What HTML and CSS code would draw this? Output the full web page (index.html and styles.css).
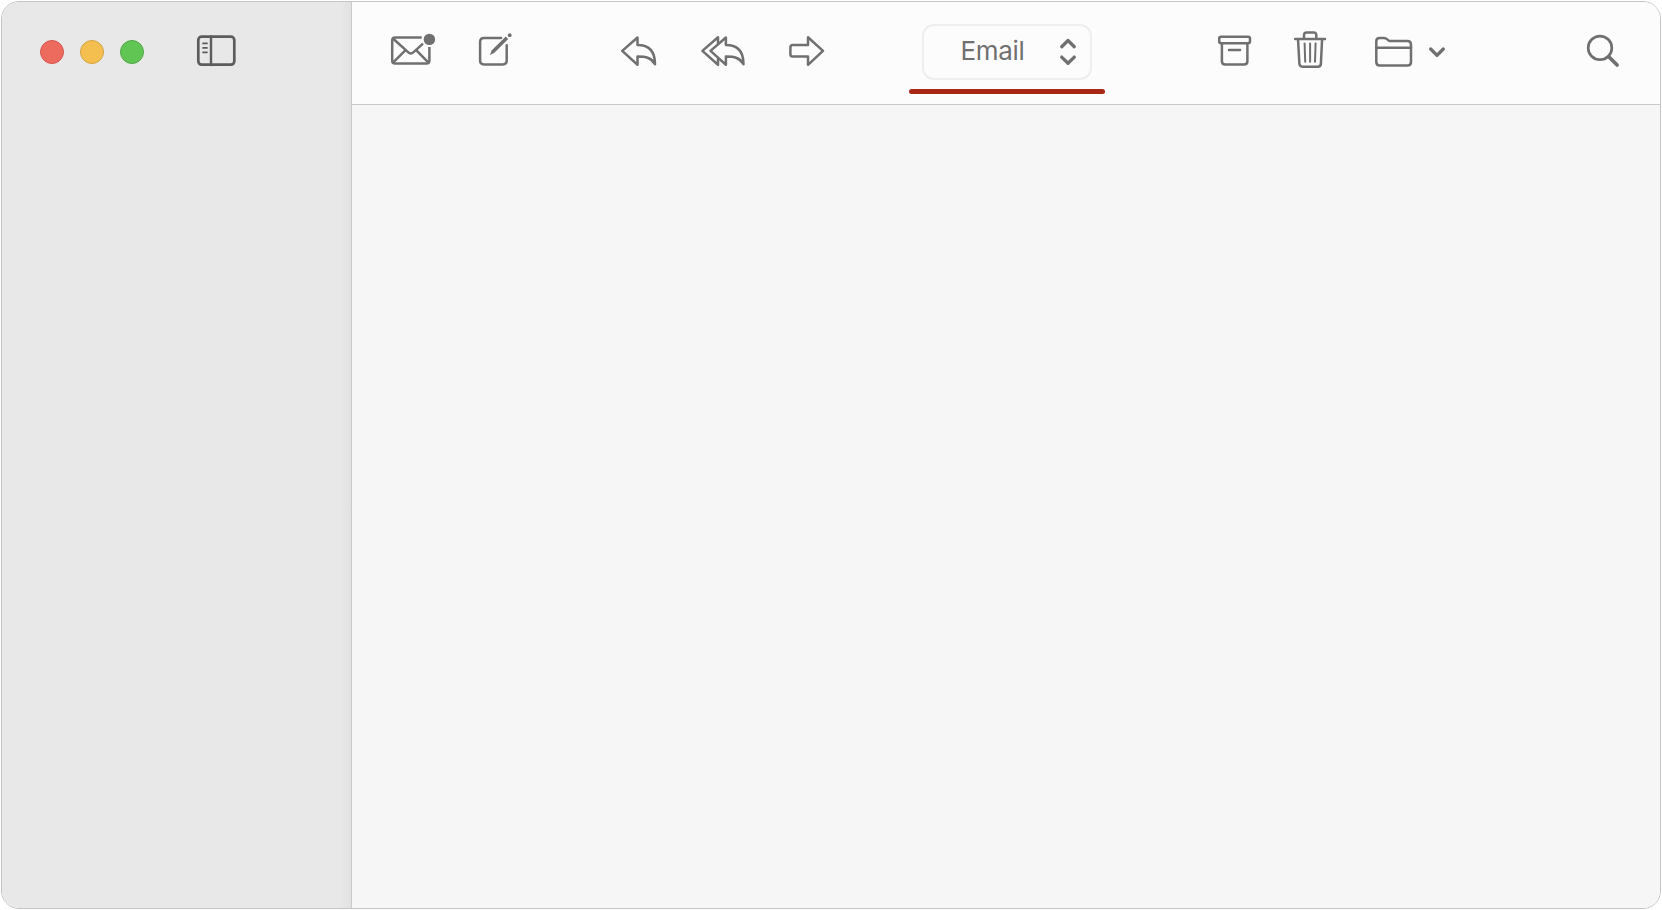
FILE: index.html
```html
<!DOCTYPE html>
<html lang="en">
<head>
<meta charset="utf-8">
<title>Mail</title>
<link rel="stylesheet" href="styles.css">
</head>
<body>
<div class="window">
  <aside class="sidebar">
    <div class="lights"><span class="light red"></span><span class="light yellow"></span><span class="light green"></span></div>
    <svg class="icon dark sidebar-toggle" width="44" height="40" viewBox="195 31 44 40">
      <rect x="198.3" y="36.7" width="36" height="28" rx="3.4" stroke-width="2.7"/>
      <path d="M211 36.5V65" stroke-width="2.4"/>
      <path d="M203 43.4h4M203 47.9h4M203 52.3h4" stroke-width="1.7"/>
    </svg>
  </aside>
  <main class="main">
    <header class="toolbar">
      <svg class="icon mail" width="48" height="40" viewBox="390 31 48 40">
        <path stroke-linecap="butt" d="M421.7 37.5H395.2Q392.2 37.5 392.2 40.5V60.4Q392.2 63.5 395.2 63.5H426.3Q429.4 63.5 429.4 60.4V47"/>
        <path stroke-linecap="butt" d="M393 38.5L408.3 52.4Q410.8 54.6 413.3 52.4L423 43.6M393 62.7L405.3 50.3M428.5 62.7L416.4 50.3"/>
        <circle class="solid" cx="429.4" cy="39.4" r="5.7"/>
      </svg>
      <svg class="icon compose" width="36" height="40" viewBox="477 31 36 40">
        <path d="M501 38.1H484Q480.1 38.1 480.1 42V60.6Q480.1 64.5 484 64.5H502.8Q506.7 64.5 506.7 60.6V45.2"/>
        <path class="solid" d="M490 54.9L491.8 50.3L505.8 36.5L508.2 38.9L494.4 52.8Z"/>
        <circle class="solid" cx="509.7" cy="35.2" r="1.9"/>
      </svg>
      <svg class="icon reply" width="40" height="40" viewBox="619 31 40 40">
        <path d="M637.5 37.5V45.1C648 45.1 655 50.5 655 64.2C651.5 57.8 646 56.6 637.5 56.6V64.7L622.2 50.9Z"/>
      </svg>
      <svg class="icon reply-all" width="48" height="40" viewBox="700 31 48 40">
        <path d="M725.9 37.5V45.1C736.4 45.1 743.5 50.5 743.5 64.2C740 57.8 734.4 56.6 725.9 56.6V64.7L710.5 50.9Z"/>
        <path d="M718 43.2V37.3L702.4 50.9L718 64.8V58.8"/>
      </svg>
      <svg class="icon forward" width="40" height="40" viewBox="787 31 40 40">
        <path d="M808 37.3V45.1H792.7Q790.4 45.1 790.4 47.5V54.3Q790.4 56.6 792.7 56.6H808V64.8L823 50.9Z"/>
      </svg>
      <div class="picker-wrap">
        <button class="picker"><span class="label">Email</span>
          <svg class="icon thick" width="18" height="30" viewBox="1059 37 18 30"><path d="M1061.7 46.7L1068 40.5L1074.3 46.7M1061.7 57.1L1068 63.3L1074.3 57.1"/></svg>
        </button>
        <div class="underline"></div>
      </div>
      <svg class="icon archive" width="38" height="40" viewBox="1216 31 38 40">
        <rect x="1219.2" y="36.8" width="30.8" height="6.5" rx="2"/>
        <path d="M1221.9 43.3V61.2Q1221.9 64.6 1225.3 64.6H1244Q1247.4 64.6 1247.4 61.2V43.3M1229 50H1240"/>
      </svg>
      <svg class="icon trash" width="36" height="42" viewBox="1292 29 36 42">
        <path d="M1295.2 39H1325M1304 38V35Q1304 32.4 1306.7 32.4H1313.6Q1316.3 32.4 1316.3 35V38M1298 39L1299.4 63.8Q1299.6 66.7 1302.5 66.7H1317.8Q1320.7 66.7 1320.9 63.8L1322.1 39"/>
        <path stroke-width="2" d="M1304.6 43.5L1305.2 61.7M1310.1 43.5V61.7M1315.6 43.5L1315 61.7"/>
      </svg>
      <svg class="icon folder" width="42" height="40" viewBox="1373 31 42 40">
        <path d="M1376.3 47.8V41.4Q1376.3 38 1379.6 38H1383.8Q1385.8 38 1387.3 39.4L1388.5 40.4Q1389.4 41.1 1390.7 41.1H1407.4Q1411 41.1 1411 44.8V62Q1411 65.6 1407.4 65.6H1379.9Q1376.3 65.6 1376.3 62Z"/><path d="M1376.3 47.8H1411"/>
      </svg>
      <svg class="icon thick chevron" width="20" height="16" viewBox="1427 44 20 16"><path d="M1430.7 49L1437 55.4L1443.3 49"/></svg>
      <svg class="icon search" width="36" height="40" viewBox="1585 31 36 40">
        <circle cx="1600" cy="47.9" r="11.8" stroke-width="2.7"/><path d="M1608.8 56.8L1617.1 65" stroke-width="3.7"/>
      </svg>
    </header>
    <section class="content"></section>
  </main>
</div>
</body>
</html>
```
FILE: styles.css
```css
* { box-sizing: border-box; }
body { margin: 0; background: #fff; font-family: Inter, "Liberation Sans", sans-serif; }
.window {
  display: flex;
  width: 1660px;
  height: 908px;
  margin: 1px 0 0 1px;
  border: 1px solid #c4c4c4;
  border-radius: 18px;
  overflow: hidden;
}
.sidebar {
  display: flex;
  align-items: flex-start;
  width: 350px;
  padding-left: 38px;
  background: linear-gradient(90deg, #e8e8e8 97%, #e1e1e1);
  border-right: 1px solid #cbcbcb;
}
.lights { display: flex; gap: 16px; margin-top: 38px; }
.light { width: 24px; height: 24px; border-radius: 50%; border: 1px solid; }
.red { background: #ed6a5e; border-color: #d5584d; }
.yellow { background: #f5bf4f; border-color: #d6a243; }
.green { background: #61c554; border-color: #51a843; }
.icon { display: block; flex: none; fill: none; stroke: #707070; stroke-width: 2.5; stroke-linecap: round; stroke-linejoin: round; }
.solid { fill: #707070; stroke: none; }
.dark { stroke: #5c5c5c; }
.thick { stroke-width: 3.3; }
.sidebar-toggle { margin: 29px 0 0 51px; }
.main { display: flex; flex: 1; flex-direction: column; }
.toolbar { display: flex; align-items: flex-start; height: 103px; padding-top: 29px; background: #fcfcfc; border-bottom: 1px solid #c9c9c9; }
.content { flex: 1; background: #f6f6f6; }
.mail { margin-left: 38px; }
.compose { margin-left: 39px; }
.reply { margin-left: 106px; }
.reply-all { margin-left: 41px; }
.forward { margin-left: 39px; }
.picker-wrap { display: flex; flex-direction: column; align-items: center; width: 196px; margin: -7px 0 0 82px; }
.picker { display: flex; align-items: center; width: 170px; height: 56px; padding: 0 13px 0 36.5px; border: 2px solid #eee; border-radius: 12px; background: #fcfcfc; color: #707070; font: 400 26px Inter, sans-serif; }
.label { flex: 1; padding-bottom: 4px; text-align: left; letter-spacing: -0.3px; }
.underline { width: 196px; height: 5px; margin-top: 9px; border-radius: 3px; background: #a82818; }
.archive { margin-left: 111px; }
.trash { margin: -2px 0 0 38px; }
.folder { margin-left: 45px; }
.chevron { margin: 13px 0 0 12px; }
.search { margin-left: 138px; }
```
